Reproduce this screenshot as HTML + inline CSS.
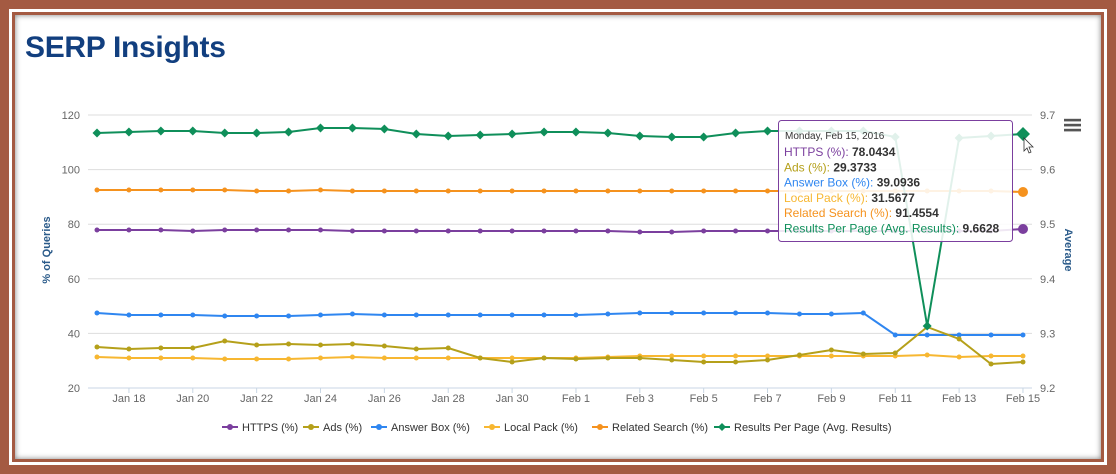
<!DOCTYPE html>
<html><head><meta charset="utf-8"><style>
body{margin:0;width:1116px;height:474px;background:#a45a42;overflow:hidden;font-family:"Liberation Sans",sans-serif}
.w1{position:absolute;left:9px;top:9px;width:1098px;height:456px;border:3px solid #fff;box-sizing:border-box}
.c{position:absolute;left:15px;top:15px;width:1086px;height:444px;background:#fff;box-shadow:inset 0 0 6px rgba(0,0,0,.5)}
h1{position:absolute;left:25px;top:31px;margin:0;font-size:30px;color:#123f7f;font-weight:bold;letter-spacing:-0.3px}
svg{position:absolute;left:0;top:0}
</style></head><body>
<div class="w1"></div><div class="c"></div>
<h1>SERP Insights</h1>
<svg id="s" width="1116" height="474" font-family="Liberation Sans, sans-serif"></svg>
<script>
var s=document.getElementById('s'),h='';
function X(i){return 97+31.93*i}
var grid=[115,169.6,224.2,278.8,333.4,388],lab=[120,100,80,60,40,20],rl=['9.7','9.6','9.5','9.4','9.3','9.2'];
grid.forEach(function(y,k){h+='<line x1="88" x2="1032" y1="'+y+'" y2="'+y+'" stroke="'+(k==5?'#c8d6e4':'#ddd')+'"/>';
h+='<text x="80" y="'+(y+4)+'" font-size="11" fill="#666" text-anchor="end">'+lab[k]+'</text>';
h+='<text x="1040" y="'+(y+4)+'" font-size="11" fill="#666">'+rl[k]+'</text>';});
var dl=['Jan 18','Jan 20','Jan 22','Jan 24','Jan 26','Jan 28','Jan 30','Feb 1','Feb 3','Feb 5','Feb 7','Feb 9','Feb 11','Feb 13','Feb 15'];
dl.forEach(function(t,k){var x=X(1+2*k);h+='<line x1="'+x+'" x2="'+x+'" y1="388" y2="393" stroke="#c8d6e4"/><text x="'+x+'" y="402" font-size="11" fill="#666" text-anchor="middle">'+t+'</text>';});
h+='<text transform="translate(50,250) rotate(-90)" font-size="11" font-weight="bold" fill="#2b5b8a" text-anchor="middle">% of Queries</text>';
h+='<text transform="translate(1065,250) rotate(90)" font-size="11" font-weight="bold" fill="#2b5b8a" text-anchor="middle">Average</text>';
var S=[
['#f7b731',[357,358,358,358,359,359,359,358,357,358,358,358,358,358,358,358,357,356,356,356,356,356,356,356,356,356,355,357,356,356],'c'],
['#f5921e',[190,190,190,190,190,191,191,190,191,191,191,191,191,191,191,191,191,191,191,191,191,191,191,191,191,191,191,191,191,192],'c'],
['#7b3f9e',[230,230,230,231,230,230,230,230,231,231,231,231,231,231,231,231,231,232,232,231,231,231,231,231,231,231,231,231,231,229],'c'],
['#2f86f0',[313,315,315,315,316,316,316,315,314,315,315,315,315,315,315,315,314,313,313,313,313,313,314,314,313,335,335,335,335,335],'c'],
['#b5a01a',[347,349,348,348,341,345,344,345,344,346,349,348,358,362,358,359,358,358,360,362,362,360,355,350,354,353,327,339,364,362],'c'],
['#0f8f5a',[133,132,131,131,133,133,132,128,128,129,134,136,135,134,132,132,133,136,137,137,133,131,131,131,131,137,326,138,136,134],'d']];
S.forEach(function(q){var p=q[1].map(function(y,i){return X(i).toFixed(1)+','+y}).join(' ');
h+='<polyline points="'+p+'" fill="none" stroke="'+q[0]+'" stroke-width="2"/>';
q[1].forEach(function(y,i){var x=X(i);if(q[2]=='d')h+='<path d="M'+x+' '+(y-4.5)+'l4.5 4.5-4.5 4.5-4.5-4.5z" fill="'+q[0]+'"/>';else h+='<circle cx="'+x+'" cy="'+y+'" r="2.5" fill="'+q[0]+'"/>';});});
[120,125,130].forEach(function(y){h+='<rect x="1064" y="'+(y-1.2)+'" width="17" height="2.6" fill="#555"/>';});
h+='<rect x="778.5" y="120.5" width="234" height="121" rx="3" fill="rgba(255,255,255,0.88)" stroke="#7b3f9e"/>';
h+='<circle cx="1023" cy="229" r="5" fill="#7b3f9e"/><circle cx="1023" cy="192" r="5" fill="#f5921e"/><path d="M1023 127l7 7-7 7-7-7z" fill="#0f8f5a"/>';
h+='<path d="M1024 138v13l3-3 2 5 2-1-2-5h4z" fill="#fff" stroke="#333" stroke-width="0.8"/>';
h+='<text x="785" y="139" font-size="10" fill="#333">Monday, Feb 15, 2016</text>';
var tl=[['#7b3f9e','HTTPS (%): ','78.0434'],['#b5a01a','Ads (%): ','29.3733'],['#2f86f0','Answer Box (%): ','39.0936'],['#f7b731','Local Pack (%): ','31.5677'],['#f5921e','Related Search (%): ','91.4554'],['#0f8f5a','Results Per Page (Avg. Results): ','9.6628']];
tl.forEach(function(t,k){h+='<text x="784" y="'+(156+15.3*k)+'" font-size="12"><tspan fill="'+t[0]+'">'+t[1]+'</tspan><tspan font-weight="bold" fill="#333">'+t[2]+'</tspan></text>';});
var lg=[['#7b3f9e','HTTPS (%)',222],['#b5a01a','Ads (%)',303],['#2f86f0','Answer Box (%)',371],['#f7b731','Local Pack (%)',484],['#f5921e','Related Search (%)',592],['#0f8f5a','Results Per Page (Avg. Results)',714]];
lg.forEach(function(l){h+='<line x1="'+l[2]+'" x2="'+(l[2]+16)+'" y1="427" y2="427" stroke="'+l[0]+'" stroke-width="2"/>';
h+=(l[0]=='#0f8f5a'?'<path d="M'+(l[2]+8)+' 423l4 4-4 4-4-4z" fill="'+l[0]+'"/>':'<circle cx="'+(l[2]+8)+'" cy="427" r="3" fill="'+l[0]+'"/>');
h+='<text x="'+(l[2]+20)+'" y="431" font-size="11" fill="#333">'+l[1]+'</text>';});
s.innerHTML=h;
</script>
</body></html>
